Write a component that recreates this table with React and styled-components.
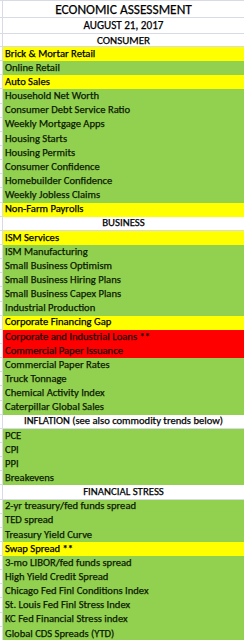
import React from "react";
import styled, { createGlobalStyle } from "styled-components";

const GlobalStyle = createGlobalStyle`
  html, body { margin: 0; padding: 0; background: #ffffff; }
  body { font-family: "Carlito", "Lato", sans-serif; color: #000; }
`;

const COLORS = {
  y: "#FFFF00",
  g: "#92D050",
  r: "#FF0000",
  w: "#FFFFFF",
};

const GRID = "#D9DBE4";

const Sheet = styled.div`
  width: 244px;
  display: flex;
  flex-direction: column;
  border-top: 1px solid ${GRID};
`;

const Row = styled.div`
  display: flex;
  height: ${(p) => p.$h}px;
  flex: none;
`;

const Gutter = styled.div`
  width: 3px;
  flex: none;
  background: #fff;
  border-right: 1px solid ${GRID};
  border-bottom: 1px solid ${GRID};
  box-sizing: border-box;
`;

const Cell = styled.div`
  flex: 1;
  min-width: 0;
  box-sizing: border-box;
  display: flex;
  align-items: center;
  justify-content: ${(p) => (p.$center ? "center" : "flex-start")};
  padding-left: ${(p) => (p.$center ? 0 : 2)}px;
  background: ${(p) => COLORS[p.$c]};
  border-bottom: ${(p) => (p.$c === "w" ? `1px solid ${GRID}` : "none")};
  font-size: ${(p) => p.$fs || 10.6}px;
  color: ${(p) => (p.$c === "r" ? "#1a0000" : p.$c === "g" ? "#0b1a00" : "#000")};
  -webkit-text-stroke: 0.25px currentColor;
  white-space: nowrap;
  overflow: hidden;
  line-height: 1;
`;

const Label = styled.span`
  display: block;
  transform: translateY(${(p) => p.$dy || 0}px);
`;

const H = 14.15;

const rows = [
  { t: "ECONOMIC ASSESSMENT", c: "w", center: true, h: 17, fs: 13.4, dy: 0.5 },
  { t: "AUGUST 21, 2017", c: "w", center: true, h: 16, fs: 11.2 },
  { t: "CONSUMER", c: "w", center: true, h: 13, fs: 11 },
  { t: "Brick & Mortar Retail", c: "y" },
  { t: "Online Retail", c: "g" },
  { t: "Auto Sales", c: "y" },
  { t: "Household Net Worth", c: "g" },
  { t: "Consumer Debt Service Ratio", c: "g" },
  { t: "Weekly Mortgage Apps", c: "g" },
  { t: "Housing Starts", c: "g" },
  { t: "Housing Permits", c: "g" },
  { t: "Consumer Confidence", c: "g" },
  { t: "Homebuilder Confidence", c: "g" },
  { t: "Weekly Jobless Claims", c: "g" },
  { t: "Non-Farm Payrolls", c: "y" },
  { t: "BUSINESS", c: "w", center: true, fs: 10.8 },
  { t: "ISM Services", c: "y" },
  { t: "ISM Manufacturing", c: "g" },
  { t: "Small Business Optimism", c: "g" },
  { t: "Small Business Hiring Plans", c: "g" },
  { t: "Small Business Capex Plans", c: "g" },
  { t: "Industrial Production", c: "g" },
  { t: "Corporate Financing Gap", c: "y" },
  { t: "Corporate and Industrial Loans **", c: "r" },
  { t: "Commercial Paper Issuance", c: "r" },
  { t: "Commercial Paper Rates", c: "g" },
  { t: "Truck Tonnage", c: "g" },
  { t: "Chemical Activity Index", c: "g" },
  { t: "Caterpillar Global Sales", c: "g" },
  { t: "INFLATION (see also commodity trends below)", c: "w", center: true, fs: 10.6 },
  { t: "PCE", c: "g" },
  { t: "CPI", c: "g" },
  { t: "PPI", c: "g" },
  { t: "Breakevens", c: "g" },
  { t: "FINANCIAL STRESS", c: "w", center: true, fs: 10.8 },
  { t: "2-yr treasury/fed funds spread", c: "g" },
  { t: "TED spread", c: "g" },
  { t: "Treasury Yield Curve", c: "g" },
  { t: "Swap Spread **", c: "y" },
  { t: "3-mo LIBOR/fed funds spread", c: "g" },
  { t: "High Yield Credit Spread", c: "g" },
  { t: "Chicago Fed Finl Conditions Index", c: "g" },
  { t: "St. Louis Fed Finl Stress Index", c: "g" },
  { t: "KC Fed Financial Stress index", c: "g" },
  { t: "Global CDS Spreads (YTD)", c: "g" },
];

export default function App() {
  return (
    <>
      <GlobalStyle />
      <Sheet>
        {rows.map((r, i) => (
          <Row key={i} $h={r.h || H}>
            <Gutter />
            <Cell $c={r.c} $center={r.center} $fs={r.fs}>
              <Label $dy={r.dy}>{r.t}</Label>
            </Cell>
          </Row>
        ))}
      </Sheet>
    </>
  );
}
